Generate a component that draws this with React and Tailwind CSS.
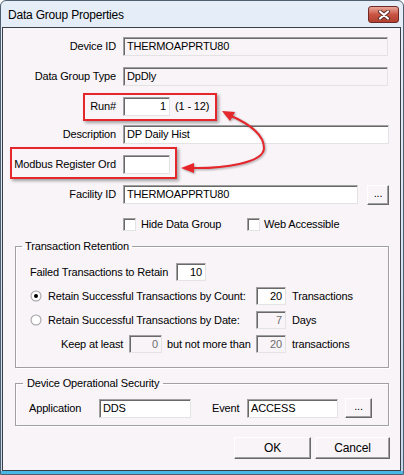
import React from "react";

const sunken =
  "border border-t-[#a0a0a0] border-l-[#a0a0a0] border-r-[#e3e3e3] border-b-[#e3e3e3] shadow-[inset_1px_1px_0_#696969]";
const raised =
  "border border-t-white border-l-white border-r-[#696969] border-b-[#696969] shadow-[inset_-1px_-1px_0_#a0a0a0]";

function Box({ w, h = "h-[19px]", value = "", right, bg = "bg-white", muted }) {
  return (
    <div
      className={`${sunken} ${w} ${h} ${bg} flex shrink-0 items-center ${
        right ? "justify-end pr-[3px]" : "pl-[3px]"
      } ${muted ? "text-[#6d6d6d]" : "text-black"}`}
    >
      {value}
    </div>
  );
}

function Row({ label, children, mt }) {
  return (
    <div className={`flex items-center h-[19px] ${mt}`}>
      <span className="w-[113px] text-right whitespace-nowrap">{label}</span>
      <div className="ml-[7px] flex items-center">{children}</div>
    </div>
  );
}

function Dots({ w }) {
  return (
    <div className={`${raised} ${w} h-[20px] flex items-center justify-center bg-[#f8f4f8] text-black leading-none pb-[3px]`}>
      ...
    </div>
  );
}

function Check() {
  return <div className={`${sunken} w-[13px] h-[13px] bg-white shrink-0`} />;
}

function Radio({ on }) {
  return (
    <svg width="12" height="12" viewBox="0 0 12 12" className="shrink-0">
      <circle cx="6" cy="6" r="5.5" fill="#a0a0a0" />
      <circle cx="6" cy="6" r="4.5" fill="#f4f4f4" />
      <circle cx="6" cy="6" r="3.8" fill="#fff" />
      {on && <circle cx="6" cy="6" r="2" fill="#000" />}
    </svg>
  );
}

export default function App() {
  return (
    <div className="w-[404px] h-[475px] relative flex flex-col border border-[#4f5f70] rounded-t-[6px] bg-linear-to-b from-[#e6eef8] to-[#c6d9ee] font-['Liberation_Sans',Arial,sans-serif] text-[11px] tracking-[-0.15px] text-black overflow-hidden">
      {/* title bar */}
      <div className="h-[26px] flex items-center justify-between pl-[7px] pr-[4px] shrink-0">
        <span className="text-[12px] tracking-[-0.2px] pt-[2px]">Data Group Properties</span>
        <div className="w-[31px] h-[17px] mt-[1px] rounded-[3px] border border-[#6e2a24] bg-linear-to-b from-[#e8a89c] via-[#c95444] to-[#b2402f] flex items-center justify-center">
          <svg width="14" height="10" viewBox="0 0 14 10">
            <path d="M3 1.5 L11 8.5 M11 1.5 L3 8.5" stroke="#5a2a26" strokeWidth="4" strokeLinecap="round" />
            <path d="M3 1.5 L11 8.5 M11 1.5 L3 8.5" stroke="#fff" strokeWidth="2.2" strokeLinecap="round" />
          </svg>
        </div>
      </div>

      {/* body */}
      <div className="flex-1 ml-[1px] mr-[2px] border border-[#3a3f46] bg-[#f8f4f8] flex flex-col">
        <Row label="Device ID" mt="mt-[9px]">
          <Box w="w-[265px]" value="THERMOAPPRTU80" bg="bg-[#f8f4f8]" />
        </Row>
        <Row label="Data Group Type" mt="mt-[11px]">
          <Box w="w-[265px]" value="DpDly" bg="bg-[#f8f4f8]" />
        </Row>
        <Row label="Run#" mt="mt-[11px]">
          <Box w="w-[47px]" value="1" right />
          <span className="ml-[5px]">(1 - 12)</span>
        </Row>
        <Row label="Description" mt="mt-[9px]">
          <Box w="w-[266px]" value="DP Daily Hist" />
        </Row>
        <Row label="Modbus Register Ord" mt="mt-[11px]">
          <Box w="w-[47px]" />
        </Row>
        <Row label="Facility ID" mt="mt-[11px]">
          <Box w="w-[235px]" value="THERMOAPPRTU80" />
          <div className="ml-[9px]">
            <Dots w="w-[22px]" />
          </div>
        </Row>

        <div className="flex items-center h-[13px] mt-[14px] ml-[120px]">
          <Check />
          <span className="ml-[5px] w-[106px]">Hide Data Group</span>
          <Check />
          <span className="ml-[4px]">Web Accessible</span>
        </div>

        <fieldset className="ml-[12px] w-[374px] mt-[8px] border border-[#a0a0a0] shadow-[inset_1px_1px_0_#fff,1px_1px_0_#fff] pb-[14px]">
          <legend className="ml-[6px] px-[3px] leading-[14px]">Transaction Retention</legend>
          <div className="flex items-center h-[18px] mt-[10px] pl-[14px]">
            <span className="w-[146px]">Failed Transactions to Retain</span>
            <Box w="w-[30px]" h="h-[18px]" value="10" right />
          </div>
          <div className="flex items-center h-[18px] mt-[6px] pl-[14px]">
            <Radio on />
            <span className="ml-[6px] w-[208px]">Retain Successful Transactions by Count:</span>
            <Box w="w-[30px]" h="h-[18px]" value="20" right />
            <span className="ml-[6px]">Transactions</span>
          </div>
          <div className="flex items-center h-[18px] mt-[6px] pl-[14px]">
            <Radio />
            <span className="ml-[6px] w-[208px]">Retain Successful Transactions by Date:</span>
            <Box w="w-[30px]" h="h-[18px]" value="7" right bg="bg-[#f8f4f8]" muted />
            <span className="ml-[6px]">Days</span>
          </div>
          <div className="flex items-center h-[18px] mt-[6px] pl-[45px]">
            <span className="w-[68px]">Keep at least</span>
            <Box w="w-[33px]" h="h-[18px]" value="0" right bg="bg-[#f8f4f8]" muted />
            <span className="ml-[5px] w-[89px]">but not more than</span>
            <Box w="w-[30px]" h="h-[18px]" value="20" right bg="bg-[#f8f4f8]" muted />
            <span className="ml-[6px]">transactions</span>
          </div>
        </fieldset>

        <fieldset className="ml-[12px] w-[374px] mt-[8px] border border-[#a0a0a0] shadow-[inset_1px_1px_0_#fff,1px_1px_0_#fff] pb-[7px]">
          <legend className="ml-[7px] px-[4px] leading-[14px]">Device Operational Security</legend>
          <div className="flex items-center h-[20px] mt-[8px] pl-[13px]">
            <span className="w-[70px]">Application</span>
            <Box w="w-[92px]" value="DDS" />
            <span className="ml-[21px] w-[35px]">Event</span>
            <Box w="w-[91px]" value="ACCESS" />
            <div className="ml-[7px]">
              <Dots w="w-[27px]" />
            </div>
          </div>
        </fieldset>

        <div className="flex justify-end gap-[4px] mt-[11px] pr-[10px]">
          <button className={`${raised} w-[77px] h-[22px] bg-[#f8f4f8] text-[12px]`}>OK</button>
          <button className={`${raised} w-[75px] h-[22px] bg-[#f8f4f8] text-[12px]`}>Cancel</button>
        </div>
      </div>
      <div className="h-[3px] bg-[#47b8e6] shrink-0" />

      {/* annotations */}
      <div className="absolute left-[82px] top-[92px] w-[134px] h-[28px] border-2 border-[#e5262b] shadow-[2px_2px_3px_rgba(0,0,0,0.35)] pointer-events-none" />
      <div className="absolute left-[9px] top-[146px] w-[167px] h-[32px] border-2 border-[#e5262b] shadow-[2px_2px_3px_rgba(0,0,0,0.35)] pointer-events-none" />
      <svg
        className="absolute left-0 top-0 pointer-events-none drop-shadow-[1px_1px_1px_rgba(0,0,0,0.35)]"
        width="404"
        height="475"
      >
        <path
          d="M228 114 C242 120 263 131 263 147 C263 162 222 168 188 167"
          fill="none"
          stroke="#e5262b"
          strokeWidth="2"
        />
        <polygon points="221,110 234,111 229,120" fill="#e5262b" />
        <polygon points="180,167 193,162 193,172" fill="#e5262b" />
      </svg>
    </div>
  );
}
